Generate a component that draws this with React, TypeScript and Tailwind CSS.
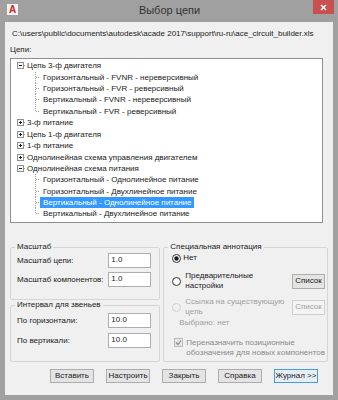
import React from "react";

const Expander = ({ open }: { open: boolean }) => (
  <svg width="7" height="7" viewBox="0 0 7 7" className="shrink-0">
    <rect x="0.5" y="0.5" width="6" height="6" fill="#f7f7f7" stroke="#8e8f8f" />
    <line x1="2" y1="3.5" x2="5" y2="3.5" stroke="#1f1f1f" />
    {!open && <line x1="3.5" y1="2" x2="3.5" y2="5" stroke="#1f1f1f" />}
  </svg>
);

const RootRow = ({ label, open }: { label: string; open?: boolean }) => (
  <div className="flex h-[11.4px] items-center">
    <div className="w-[6px] shrink-0" />
    <Expander open={!!open} />
    <svg width="2" height="7" className="shrink-0">
      <line x1="0" y1="3.5" x2="2" y2="3.5" stroke="#a0a0a0" strokeDasharray="1 1" />
    </svg>
    <span className="px-[1px] leading-[11px] whitespace-nowrap">{label}</span>
  </div>
);

const ChildRow = ({ label, last, sel }: { label: string; last?: boolean; sel?: boolean }) => (
  <div className="flex h-[11.4px] items-stretch">
    <div className="w-[24px] shrink-0" />
    <svg width="5" height="12" className="shrink-0">
      <line x1="0.5" y1="0" x2="0.5" y2={last ? 6 : 12} stroke="#a0a0a0" strokeDasharray="1 1" />
      <line x1="1" y1="5.5" x2="5" y2="5.5" stroke="#a0a0a0" strokeDasharray="1 1" />
    </svg>
    <span
      className={
        "px-[3px] leading-[11.4px] whitespace-nowrap " +
        (sel ? "bg-[#3399ff] text-white" : "")
      }
    >
      {label}
    </span>
  </div>
);

const Field = ({ label, value }: { label: string; value: string }) => (
  <div className="flex items-center justify-between h-[15px] pl-[6px] pr-[8px]">
    <span className="whitespace-nowrap">{label}</span>
    <div className="w-[43px] h-[15px] border border-[#abadb3] bg-white pl-[2px] pt-[1px] leading-[10px]">
      {value}
    </div>
  </div>
);

const Btn = ({ children, def }: { children: React.ReactNode; def?: boolean }) => (
  <div
    className={
      "w-[44px] h-[14px] flex items-center justify-center border whitespace-nowrap leading-[10px] " +
      (def ? "border-[#4a9ae3] bg-[#e6eef6]" : "border-[#adadad] bg-[#e4e4e4]")
    }
  >
    {children}
  </div>
);

const Radio = ({ checked, disabled }: { checked?: boolean; disabled?: boolean }) => (
  <svg width="9" height="9" viewBox="0 0 9 9" className="shrink-0">
    <circle
      cx="4.5"
      cy="4.5"
      r="4"
      fill={disabled ? "#f0f0f0" : "#ffffff"}
      stroke={disabled ? "#d0d0d0" : "#333333"}
    />
    {checked && <circle cx="4.5" cy="4.5" r="2.2" fill="#1a1a1a" />}
  </svg>
);

export default function App() {
  return (
    <div className="w-[338px] h-[400px] bg-[#a0a0a0] flex flex-col font-['Liberation_Sans',Arial,sans-serif] text-[8px] text-[#1a1a1a] overflow-hidden">
      {/* Title bar */}
      <div className="h-[22px] flex items-start shrink-0">
        <div className="ml-[7px] mt-[4px] w-[11px] h-[11px] bg-[#f3f3f3] flex items-center justify-center">
          <span className="text-[#d4232a] font-bold text-[10px] leading-[10px]">A</span>
        </div>
        <div className="flex-1 text-center pl-[8px] pt-[4px] text-[11px] leading-[13px] text-[#333333]">
          Выбор цепи
        </div>
        <div className="mr-[4px] w-[21px] h-[14px] bg-[#c75050] flex items-center justify-center">
          <svg width="7" height="7" viewBox="0 0 7 7">
            <line x1="1" y1="1" x2="6" y2="6" stroke="#fff" strokeWidth="1.4" />
            <line x1="6" y1="1" x2="1" y2="6" stroke="#fff" strokeWidth="1.4" />
          </svg>
        </div>
      </div>

      {/* Client area */}
      <div className="mx-[5px] w-[328px] h-[373px] bg-[#f0f0f0] flex flex-col px-[5px] pt-[6px]">
        <div className="h-[12px] leading-[12px] pl-[2px] whitespace-nowrap">
          C:\users\public\documents\autodesk\acade 2017\support\ru-ru\ace_circuit_builder.xls
        </div>
        <div className="mt-[4px] h-[12px] leading-[12px]">Цепи:</div>

        <div className="mt-[2px] w-[313px] h-[165px] bg-white border border-[#8e8f8f] pt-[1.3px] overflow-hidden">
          <RootRow label="Цепь 3-ф двигателя" open />
          <ChildRow label="Горизонтальный - FVNR - нереверсивный" />
          <ChildRow label="Горизонтальный - FVR - реверсивный" />
          <ChildRow label="Вертикальный - FVNR - нереверсивный" />
          <ChildRow label="Вертикальный - FVR - реверсивный" last />
          <RootRow label="3-ф питание" />
          <RootRow label="Цепь 1-ф двигателя" />
          <RootRow label="1-ф питание" />
          <RootRow label="Однолинейная схема управления двигателем" />
          <RootRow label="Однолинейная схема питания" open />
          <ChildRow label="Горизонтальный - Однолинейное питание" />
          <ChildRow label="Горизонтальный - Двухлинейное питание" />
          <ChildRow label="Вертикальный - Однолинейное питание" sel />
          <ChildRow label="Вертикальный - Двухлинейное питание" last />
        </div>

        <div className="mt-[19px] flex gap-[3px]">
          {/* Left column */}
          <div className="w-[153px] flex flex-col">
            <fieldset className="border border-[#d5d5d5] rounded-[2px] h-[58px] px-0">
              <legend className="ml-[4px] px-[2px] h-[10px] leading-[10px]">Масштаб</legend>
              <div className="mt-[1px] flex flex-col gap-[4px]">
                <Field label="Масштаб цепи:" value="1.0" />
                <Field label="Масштаб компонентов:" value="1.0" />
              </div>
            </fieldset>
            <fieldset className="border border-[#d5d5d5] rounded-[2px] h-[62px] px-0">
              <legend className="ml-[4px] px-[2px] h-[10px] leading-[10px]">Интервал для звеньев</legend>
              <div className="mt-[3px] flex flex-col gap-[5px]">
                <Field label="По горизонтали:" value="10.0" />
                <Field label="По вертикали:" value="10.0" />
              </div>
            </fieldset>
          </div>

          {/* Right column */}
          <fieldset className="w-[164px] h-[120px] border border-[#d5d5d5] rounded-[2px] px-0">
            <legend className="ml-[4px] px-[2px] h-[10px] leading-[10px]">Специальная аннотация</legend>
            <div className="flex flex-col pl-[8px] pr-[2px]">
              <div className="h-[12px] flex items-center gap-[2px]">
                <Radio checked />
                <span className="leading-[10px]">Нет</span>
              </div>
              <div className="mt-[7px] h-[20px] flex items-center">
                <Radio />
                <span className="ml-[4px] leading-[10px] whitespace-nowrap">
                  Предварительные
                  <br />
                  настройки
                </span>
                <div className="ml-auto w-[33px] h-[15px] border border-[#adadad] bg-[#e4e4e4] flex items-center justify-center leading-[10px]">
                  Список
                </div>
              </div>
              <div className="mt-[6px] h-[20px] flex items-center">
                <Radio disabled />
                <span className="ml-[4px] leading-[10px] whitespace-nowrap text-[#a0a0a0]">
                  Ссылка на существующую
                  <br />
                  цепь
                </span>
                <div className="ml-auto w-[33px] h-[15px] border border-[#cfcfcf] bg-[#f4f4f4] text-[#a0a0a0] flex items-center justify-center leading-[10px]">
                  Список
                </div>
              </div>
              <div className="mt-[1px] h-[10px] leading-[10px] pl-[7px] text-[#a0a0a0]">Выбрано: нет</div>
              <div className="mt-[10px] flex items-start">
                <div className="ml-[2px] w-[9px] h-[9px] border border-[#bcbcbc] bg-[#e6e6e6] flex items-center justify-center shrink-0">
                  <svg width="7" height="7" viewBox="0 0 7 7">
                    <polyline points="1,3.5 3,5.5 6,1.5" fill="none" stroke="#8a8a8a" strokeWidth="1.2" />
                  </svg>
                </div>
                <span className="ml-[3px] leading-[10px] whitespace-nowrap text-[#8a8a8a]">
                  Переназначить позиционные
                  <br />
                  обозначения для новых компонентов
                </span>
              </div>
            </div>
          </fieldset>
        </div>

        <div className="mt-[7px] flex justify-end gap-[12px] pr-[10px]">
          <Btn>Вставить</Btn>
          <Btn>Настроить</Btn>
          <Btn>Закрыть</Btn>
          <Btn>Справка</Btn>
          <Btn def>Журнал &gt;&gt;</Btn>
        </div>
      </div>
    </div>
  );
}
